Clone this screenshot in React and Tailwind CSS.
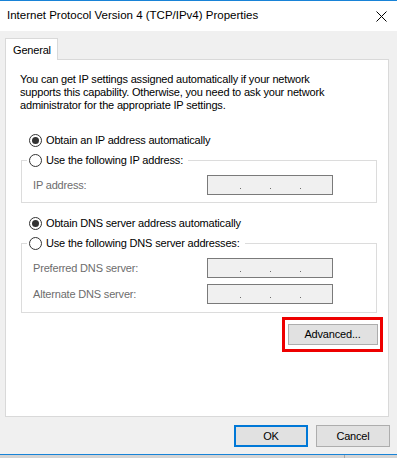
import React from "react";

function Radio({ checked, label }) {
  return (
    <div className="flex items-center h-[15px] gap-[4px]">
      <span className="w-[13px] h-[13px] rounded-full border border-[#333333] bg-white flex items-center justify-center shrink-0">
        {checked && <span className="w-[7px] h-[7px] rounded-full bg-[#333333]" />}
      </span>
      <span className="leading-[15px] whitespace-nowrap">{label}</span>
    </div>
  );
}

function IpBox() {
  return (
    <div className="w-[126px] h-[20px] border border-[#7a7a7a] bg-[#f0f0f0] flex items-end pb-[5px] pl-[32px] gap-[29px]">
      <span className="w-px h-px bg-[#6d6d6d]" />
      <span className="w-px h-px bg-[#6d6d6d]" />
      <span className="w-px h-px bg-[#6d6d6d]" />
    </div>
  );
}

function Row({ label }) {
  return (
    <div className="flex items-center justify-between pl-[11px] pr-[43px]">
      <span className="text-[#6d6d6d] whitespace-nowrap">{label}</span>
      <IpBox />
    </div>
  );
}

export default function App() {
  return (
    <div className="w-[397px] h-[458px] bg-[#f0f0f0] flex flex-col overflow-hidden font-['Liberation_Sans',Arial,sans-serif] text-[11px] tracking-[-0.18px] text-black">
      <div className="h-px bg-[#1883d7]" />
      <div className="h-[30px] bg-white flex items-center justify-between pl-[7px] pr-[10px]">
        <span className="text-[11.5px] tracking-normal whitespace-nowrap">Internet Protocol Version 4 (TCP/IPv4) Properties</span>
        <svg width="11" height="11" viewBox="0 0 11 11" className="mt-[1px]">
          <path d="M0.5 0.5 L10.5 10.5 M10.5 0.5 L0.5 10.5" stroke="#000" strokeWidth="1" fill="none" />
        </svg>
      </div>

      <div className="flex flex-col pl-[5px] pr-[8px] mt-[7px]">
        <div className="relative z-10 -mb-px w-[53px] h-[22px] bg-white border border-b-0 border-[#d9d9d9] flex items-start pt-[3px] pl-[7px]">
          <span>General</span>
        </div>
        <div className="h-[358px] bg-white border border-[#d9d9d9] flex flex-col">
          <p className="ml-[14px] mt-[13px] leading-[13px] whitespace-nowrap">
            You can get IP settings assigned automatically if your network
            <br />
            supports this capability. Otherwise, you need to ask your network
            <br />
            administrator for the appropriate IP settings.
          </p>

          <div className="ml-[23px] mt-[21px]">
            <Radio checked label="Obtain an IP address automatically" />
          </div>

          <fieldset className="mt-[5px] ml-[15px] mr-[11px] border border-[#dcdcdc] pb-[7px]">
            <legend className="ml-[5px] pl-[2px] pr-[5px]">
              <Radio label="Use the following IP address:" />
            </legend>
            <div className="mt-[7px]">
              <Row label="IP address:" />
            </div>
          </fieldset>

          <div className="ml-[23px] mt-[13px]">
            <Radio checked label="Obtain DNS server address automatically" />
          </div>

          <fieldset className="mt-[5px] ml-[15px] mr-[11px] border border-[#dcdcdc] pb-[8px]">
            <legend className="ml-[5px] pl-[2px] pr-[5px]">
              <Radio label="Use the following DNS server addresses:" />
            </legend>
            <div className="mt-[7px] flex flex-col gap-[6px]">
              <Row label="Preferred DNS server:" />
              <Row label="Alternate DNS server:" />
            </div>
          </fieldset>

          <div className="self-end mt-[4px] mr-[5px] w-[101px] h-[35px] border-[3px] border-[#ee0000] flex items-center justify-center">
            <div className="w-[90px] h-[21px] bg-[#e1e1e1] border border-[#adadad] flex items-center justify-center">
              Advanced...
            </div>
          </div>
        </div>
      </div>

      <div className="flex justify-end gap-[8px] pr-[7px] mt-[8px]">
        <div className="w-[74px] h-[22px] bg-[#e1e1e1] border-2 border-[#0078d7] flex items-center justify-center">OK</div>
        <div className="w-[74px] h-[22px] bg-[#e1e1e1] border border-[#adadad] flex items-center justify-center">Cancel</div>
      </div>

      <div className="mt-[7px] h-px bg-[#1883d7]" />
      <div className="flex-1 bg-[#d4d4d4] flex">
        <div className="w-[344px]" />
        <div className="w-px bg-[#a8a8a8]" />
      </div>
    </div>
  );
}
